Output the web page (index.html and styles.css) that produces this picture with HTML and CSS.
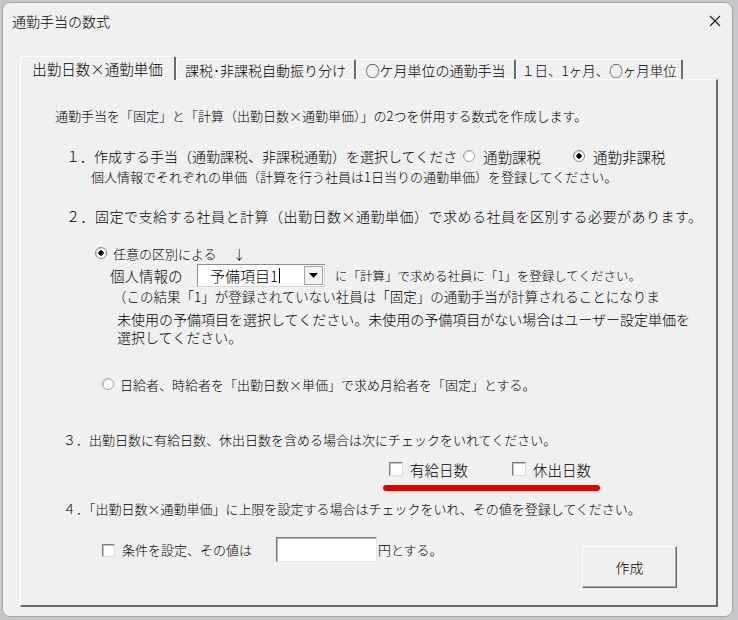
FILE: index.html
```html
<!DOCTYPE html>
<html lang="ja">
<head>
<meta charset="utf-8">
<title>通勤手当の数式</title>
<link rel="stylesheet" href="styles.css">
</head>
<body>
<div class="window">
  <div class="titlebar">
    <span class="title">通勤手当の数式</span>
    <svg class="close" width="12" height="12" viewBox="0 0 12 12"><path d="M1 1L11 11M11 1L1 11" stroke="#1a1a1a" stroke-width="1.1" fill="none"/></svg>
  </div>
  <div class="tabs">
    <div class="tab tab1 active">出勤日数×通勤単価</div>
    <div class="tab tab2">課税･非課税自動振り分け</div>
    <div class="tab tab3">○ケ月単位の通勤手当</div>
    <div class="tab tab4">１日、1ヶ月、○ヶ月単位</div>
  </div>
  <div class="panel">
    <p class="r1">通勤手当を「固定」と「計算（出勤日数×通勤単価）」の2つを併用する数式を作成します。</p>
    <div class="r2">
      <span class="q1">１．作成する手当（通勤課税、非課税通勤）を選択してくださ</span>
      <span class="opt opt-a"><span class="radio"></span>通勤課税</span>
      <span class="opt"><span class="radio on"></span>通勤非課税</span>
    </div>
    <p class="r3">個人情報でそれぞれの単価（計算を行う社員は1日当りの通勤単価）を登録してください。</p>
    <p class="r4">２．固定で支給する社員と計算（出勤日数×通勤単価）で求める社員を区別する必要があります。</p>
    <div class="r5"><span class="radio on"></span><span>任意の区別による</span><span class="arrow">↓</span></div>
    <div class="r6">
      <span class="lbl6">個人情報の</span>
      <div class="combo">
        <span class="combo-text">予備項目1</span><span class="caret"></span>
        <span class="combo-btn"><svg width="9" height="5" viewBox="0 0 9 5"><polygon points="0,0 9,0 4.5,5" fill="#000"/></svg></span>
      </div>
      <span class="t6">に「計算」で求める社員に「1」を登録してください。</span>
    </div>
    <p class="r7">（この結果「1」が登録されていない社員は「固定」の通勤手当が計算されることになりま</p>
    <p class="r8">未使用の予備項目を選択してください。未使用の予備項目がない場合はユーザー設定単価を</p>
    <p class="r9">選択してください。</p>
    <div class="r10"><span class="radio"></span><span>日給者、時給者を「出勤日数×単価」で求め月給者を「固定」とする。</span></div>
    <p class="r11">３．出勤日数に有給日数、休出日数を含める場合は次にチェックをいれてください。</p>
    <div class="r12">
      <span class="chk-opt first"><span class="check"></span>有給日数</span>
      <span class="chk-opt"><span class="check"></span>休出日数</span>
    </div>
    <div class="redline"></div>
    <p class="r13">４．「出勤日数×通勤単価」に上限を設定する場合はチェックをいれ、その値を登録してください。</p>
    <div class="r14">
      <span class="check c14"></span>
      <span class="lbl14">条件を設定、その値は</span>
      <span class="input"></span>
      <span class="yen">円とする。</span>
      <button class="btn">作成</button>
    </div>
  </div>
</div>
</body>
</html>
```
FILE: styles.css
```css
* { box-sizing: border-box; }
html, body { margin: 0; padding: 0; }
body {
  width: 738px;
  height: 620px;
  overflow: hidden;
  background: #c6c5ca;
  font-family: "Noto Sans CJK JP", "Noto Sans", sans-serif;
  font-weight: 300;
  color: #000;
}
.window {
  margin: 2px 0 0 2px;
  width: 731px;
  height: 615px;
  border: 1px solid #a4a4a4;
  border-radius: 8px;
  background: #f0f0f0;
  overflow: hidden;
}
.titlebar {
  height: 35px;
  display: flex;
  align-items: center;
  justify-content: space-between;
  padding: 0 11px 0 9px;
}
.title { font-size: 14px; line-height: 16px; }
.close { display: block; }

.tabs {
  display: flex;
  align-items: flex-end;
  height: 23px;
  margin-top: 18px;
  padding-left: 17px;
  position: relative;
  z-index: 1;
}
.tab {
  height: 20px;
  border-top: 1px solid #fff;
  border-left: 1px solid #fff;
  border-right: 2px solid #6c6c6c;
  border-radius: 2px 2px 0 0;
  font-size: 14px;
  line-height: 18px;
  display: flex;
  align-items: center;
  justify-content: center;
  white-space: nowrap;
  background: #f0f0f0;
}
.tab.active { height: 24px; margin-bottom: -1px; }
.tab1 { width: 156px; font-size: 14.5px; }
.tab2 { width: 180px; }
.tab3 { width: 160px; }
.tab4 { width: 167px; font-size: 13.5px; }

.panel {
  margin-left: 17px;
  width: 698px;
  height: 528px;
  border-top: 1px solid #fff;
  border-left: 1px solid #fff;
  border-right: 2px solid #6c6c6c;
  border-bottom: 2px solid #6c6c6c;
  padding-top: 27px;
}
.panel p { margin: 0; white-space: nowrap; }

.r1 { margin-left: 34px !important; font-size: 13px; line-height: 18px; }

.r2 { display: flex; align-items: center; height: 18px; margin: 22px 0 0 45px; }
.q1 { width: 389px; font-size: 14px; line-height: 18px; white-space: nowrap; }
.opt { display: flex; align-items: center; gap: 8px; font-size: 14.5px; white-space: nowrap; }
.opt-a { margin-left: 8px; width: 110px; }

.radio {
  flex: none;
  width: 12px;
  height: 12px;
  border-radius: 50%;
  border: 1px solid #a2a2a2;
  background: #fff;
  box-shadow: inset 1px 1px 0 #d8d8d8;
}
.radio.on {
  border-color: #8a8a8a;
  background: radial-gradient(circle, #000 0 2.4px, #fff 2.9px);
}

.r3 { margin: 3px 0 0 70px !important; font-size: 13px; line-height: 18px; }
.r4 { margin: 21px 0 0 45px !important; font-size: 14px; letter-spacing: 0.5px; line-height: 18px; }

.r5 { display: flex; align-items: center; gap: 6px; height: 18px; margin: 19px 0 0 74px; font-size: 13px; white-space: nowrap; }
.arrow { margin-left: 10px; font-size: 13px; }

.r6 { display: flex; align-items: center; height: 23px; margin: 2px 0 0 89px; white-space: nowrap; }
.lbl6 { width: 87px; font-size: 14.5px; }
.combo {
  flex: none;
  display: flex;
  align-items: center;
  width: 128px;
  height: 23px;
  background: #fff;
  border: 1px solid;
  border-color: #8c8c8c #d6d6d6 #d6d6d6 #8c8c8c;
  padding-left: 12px;
}
.combo-text { font-size: 15px; line-height: 18px; }
.caret { width: 1px; height: 15px; background: #000; margin-left: 1px; }
.combo-btn {
  margin-left: auto;
  margin-right: 1px;
  width: 19px;
  height: 19px;
  border: 1px solid #a6a6a6;
  background: #f3f3f3;
  display: flex;
  align-items: center;
  justify-content: center;
}
.combo-btn svg { display: block; }
.t6 { margin-left: 10px; font-size: 12.5px; }

.r7 { margin: 0 0 0 92px !important; font-size: 13.5px; line-height: 18px; }
.r8 { margin: 5px 0 0 96px !important; font-size: 14px; line-height: 18px; }
.r9 { margin: 0 0 0 96px !important; font-size: 14px; line-height: 18px; }

.r10 { display: flex; align-items: center; gap: 6px; height: 18px; margin: 29px 0 0 81px; font-size: 13px; white-space: nowrap; }

.r11 { margin: 38px 0 0 42px !important; font-size: 13px; line-height: 18px; }

.r12 { display: flex; align-items: center; height: 18px; margin: 11px 0 0 368px; }
.chk-opt { display: flex; align-items: center; gap: 7px; font-size: 14.5px; white-space: nowrap; }
.chk-opt.first { width: 123px; }
.check {
  flex: none;
  width: 14px;
  height: 14px;
  background: #fff;
  border: 1px solid;
  border-color: #7e7e7e #dedede #dedede #7e7e7e;
  box-shadow: inset 1px 1px 0 #c4c4c4;
}

.redline { margin: 7px 0 0 362px; width: 217px; height: 6px; border-radius: 3px; background: #e00000; }

.r13 { margin: 9px 0 0 42px !important; font-size: 13px; line-height: 18px; }

.r14 { display: flex; align-items: flex-start; height: 51px; margin: 19px 0 0 81px; padding-right: 39px; white-space: nowrap; }
.c14 { width: 13px; height: 13px; margin-top: 7px; }
.lbl14 { margin-left: 7px; width: 154px; font-size: 13px; line-height: 25px; }
.input {
  flex: none;
  width: 101px;
  height: 25px;
  background: #fff;
  border: 1px solid;
  border-color: #7a7a7a #e6e6e6 #e6e6e6 #7a7a7a;
  box-shadow: inset 1px 1px 0 #b4b4b4;
}
.yen { margin-left: 1px; font-size: 13px; line-height: 25px; }
.btn {
  margin: 9px 0 0 auto;
  width: 95px;
  height: 42px;
  padding: 0;
  background: #f0f0f0;
  border: 1px solid;
  border-color: #fff #6a6a6a #6a6a6a #fff;
  box-shadow: inset -1px -1px 0 #a8a8a8;
  font-family: "Noto Sans CJK JP", sans-serif;
  font-weight: 300;
  font-size: 14px;
  color: #000;
}
```
